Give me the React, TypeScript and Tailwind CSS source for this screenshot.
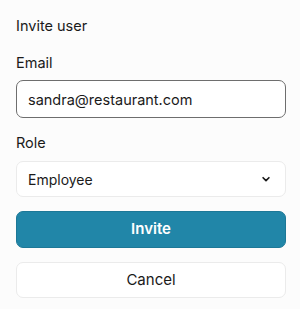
import { useState } from 'react'

export default function App() {
  const [email, setEmail] = useState('sandra@restaurant.com')
  const [role, setRole] = useState('Employee')

  return (
    <div
      className="min-h-screen bg-[#fcfcfc] pl-4 pr-[14px] pt-4 text-[#1a1a1a]"
      style={{ fontFamily: 'Inter, "Noto Sans", sans-serif' }}
    >
      <h2 className="text-[14.5px] leading-5 font-normal">Invite user</h2>

      <label className="mt-[17px] block text-[14.5px] leading-5">Email</label>
      <input
        value={email}
        onChange={(e) => setEmail(e.target.value)}
        className="mt-[7px] block h-[38px] w-full rounded-[7px] border border-[#6e6e6e] bg-white px-[11px] text-[14.5px] text-[#1a1a1a] outline-none"
      />

      <label className="mt-[15px] block text-[14.5px] leading-5">Role</label>
      <div className="relative mt-2">
        <select
          value={role}
          onChange={(e) => setRole(e.target.value)}
          className="block h-9 w-full appearance-none rounded-[7px] border border-[#ebebeb] bg-white px-[11px] text-[14px] text-[#1a1a1a] outline-none"
        >
          <option>Employee</option>
          <option>Manager</option>
          <option>Admin</option>
        </select>
        <svg
          className="pointer-events-none absolute right-[15px] top-1/2 -translate-y-1/2"
          width="10"
          height="10"
          viewBox="0 0 24 24"
          fill="none"
          stroke="#1a1a1a"
          strokeWidth="4"
          strokeLinecap="round"
          strokeLinejoin="round"
        >
          <path d="M5 9l7 7 7-7" />
        </svg>
      </div>

      <button className="mt-[14px] block h-[37px] w-full rounded-[7px] border border-[#1d7897] bg-[#2186a8] text-[15px] font-semibold text-white">
        Invite
      </button>
      <button className="mt-[14px] block h-9 w-full rounded-[7px] border border-[#ebebeb] bg-white text-[15px] text-[#1a1a1a]">
        Cancel
      </button>
    </div>
  )
}
